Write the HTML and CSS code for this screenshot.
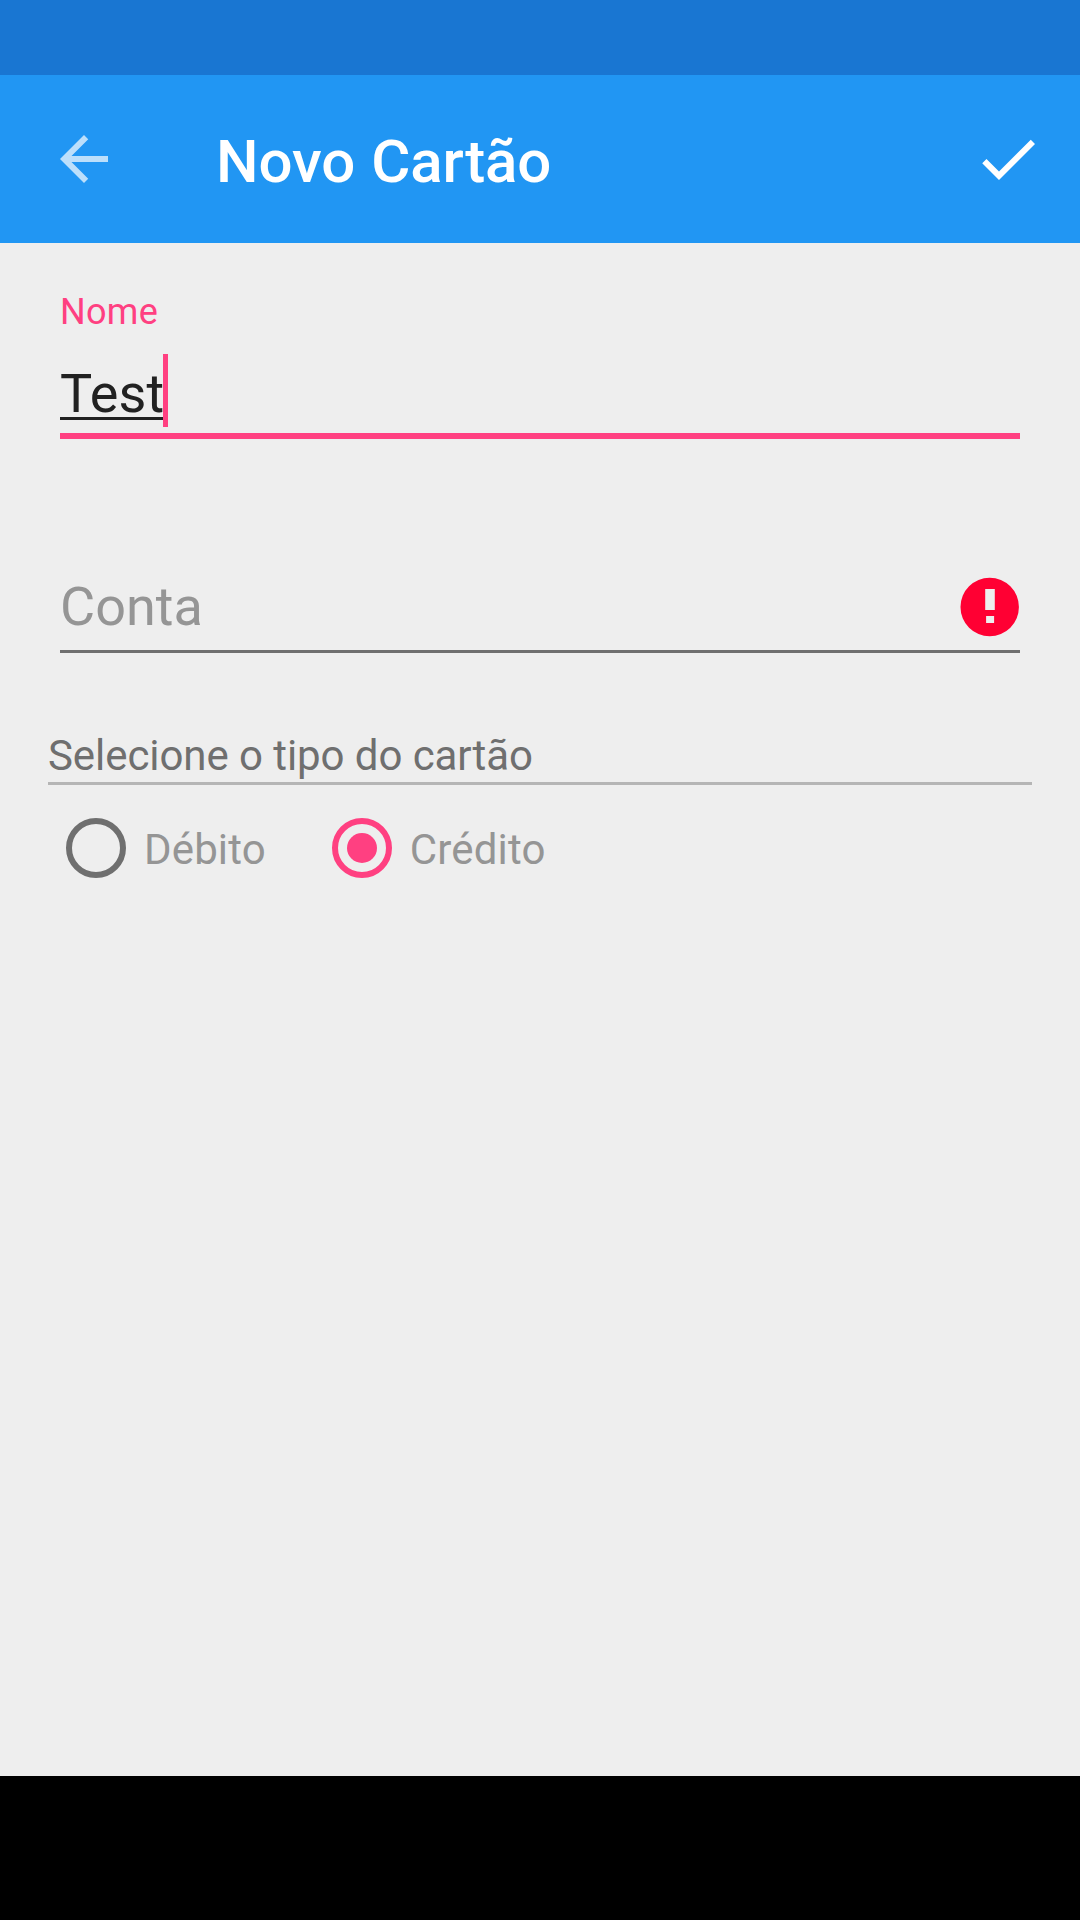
FILE: index.html
```html
<!DOCTYPE html>
<html lang="pt">
<head>
<meta charset="utf-8">
<title>Novo Cartão</title>
<link rel="stylesheet" href="styles.css">
</head>
<body>
<div class="status-bar"></div>
<header class="toolbar">
  <svg class="icon icon-back" viewBox="0 0 24 24"><path d="M20 11H7.83l5.59-5.59L12 4l-8 8 8 8 1.41-1.41L7.83 13H20v-2z"/></svg>
  <h1 class="title">Novo Cartão</h1>
  <svg class="icon" viewBox="0 0 24 24"><path d="M9 16.17L4.83 12l-1.42 1.41L9 19 21 7l-1.41-1.41z"/></svg>
</header>
<main class="form">
  <div class="label">Nome</div>
  <div class="field field-focused">
    <span class="value"><span class="composing">Test</span></span>
    <span class="cursor"></span>
  </div>
  <div class="field field-account">
    <span class="hint">Conta</span>
    <svg class="error" viewBox="0 0 60 60"><path fill-rule="evenodd" d="M29.7 .8a29.2 29.2 0 1 0 0 58.4a29.2 29.2 0 1 0 0-58.4zM25.2 12h9.6v21h-9.6zM26.1 39h8v7h-8z"/></svg>
  </div>
  <div class="section">Selecione o tipo do cartão</div>
  <div class="options">
    <div class="option"><span class="radio"></span><span class="option-text">Débito</span></div>
    <div class="option"><span class="radio radio-checked"></span><span class="option-text">Crédito</span></div>
  </div>
</main>
<footer class="nav-bar"></footer>
</body>
</html>
```
FILE: styles.css
```css
* { box-sizing: border-box; }

body {
  margin: 0;
  height: 1920px;
  display: flex;
  flex-direction: column;
  background: #eeeeee;
  font-family: Roboto, sans-serif;
}

.status-bar { height: 75px; background: #1976d2; }

.toolbar {
  height: 168px;
  padding: 0 36px 0 48px;
  display: flex;
  align-items: center;
  background: #2196f3;
}

.icon { width: 72px; height: 72px; fill: #fff; }
.icon-back { fill: #bcdffb; }

.title {
  flex: 1;
  margin: 0;
  padding: 5px 0 0 96px;
  font-size: 60px;
  font-weight: 500;
  line-height: 80px;
  letter-spacing: -0.1px;
  word-spacing: 1.3px;
  color: #fff;
}

.form { flex: 1; padding: 48px 48px 0; }

.label {
  margin: 0 12px 21px;
  font-size: 36px;
  line-height: 42px;
  letter-spacing: 0.3px;
  color: #ff4081;
}

.field {
  display: flex;
  margin: 0 12px;
  font-size: 54px;
}

.field-focused {
  height: 85px;
  line-height: 79px;
  border-bottom: 6px solid #ff4081;
}

.value { width: 104px; color: #212121; }

.composing {
  letter-spacing: 0.15px;
  text-decoration: underline;
  text-decoration-thickness: 3px;
  text-decoration-skip-ink: none;
  text-underline-offset: 5px;
}

.cursor {
  width: 5px;
  height: 73px;
  margin-left: -1px;
  background: #ff4081;
}

.field-account {
  height: 90px;
  margin-top: 124px;
  justify-content: space-between;
  align-items: center;
  line-height: 87px;
  border-bottom: 3px solid #6f6f6f;
}

.hint { color: #959595; }

.error { width: 60px; height: 60px; fill: #ff0033; }

.section {
  height: 55px;
  margin-top: 77px;
  font-size: 42px;
  line-height: 52px;
  letter-spacing: -0.07px;
  color: #6f6f6f;
  border-bottom: 3px solid #b5b5b5;
}

.options { display: flex; gap: 66px; padding: 33px 18px 0; }

.option { display: flex; align-items: center; gap: 18px; height: 60px; }

.radio {
  width: 60px;
  height: 60px;
  border: 6px solid #6f6f6f;
  border-radius: 50%;
}

.radio-checked {
  display: grid;
  place-items: center;
  border-color: #ff4081;
}

.radio-checked::after {
  content: "";
  width: 30px;
  height: 30px;
  border-radius: 50%;
  background: #ff4081;
}

.option-text {
  padding-top: 3px;
  font-size: 42px;
  line-height: 50px;
  letter-spacing: 0.15px;
  color: #959595;
}

.nav-bar { height: 144px; background: #000; }
```
